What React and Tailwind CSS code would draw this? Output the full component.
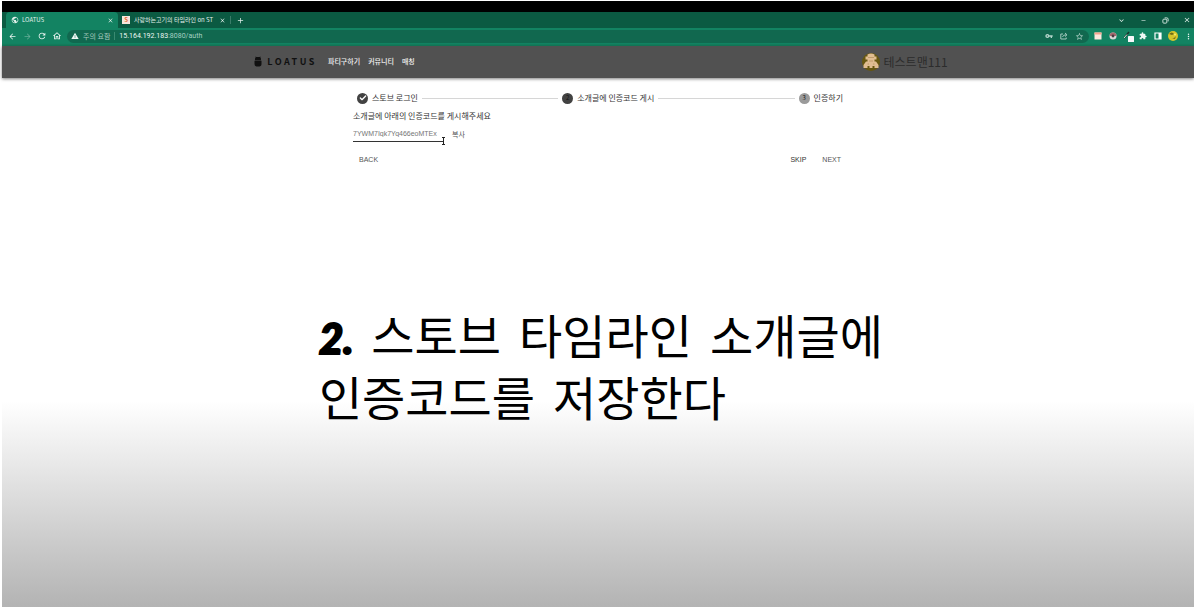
import React from "react";
import { Check } from "lucide-react";
import {
  MdArrowBack,
  MdArrowForward,
  MdRefresh,
  MdOutlineHome,
  MdWarning,
  MdVpnKey,
  MdStarBorder,
  MdExtension,
  MdMoreVert,
  MdClose,
  MdAdd,
  MdPublic,
  MdKeyboardArrowDown,
  MdRemove,
} from "react-icons/md";

function IconButton({ label, children, className = "" }) {
  return (
    <button
      type="button"
      aria-label={label}
      className={"flex size-[10px] shrink-0 items-center justify-center " + className}
    >
      {children}
    </button>
  );
}

function TabStrip() {
  return (
    <div className="flex h-4 items-stretch bg-[#0b5a42] text-[7px] leading-4 text-[#e3f1ec]">
      <div className="ml-1 flex w-[112px] items-center rounded-t bg-[#138362] pr-[3px] pl-[5px]">
        <MdPublic className="size-[8px]" />
        <span className="ml-[3px] flex-1 text-[6px]">LOATUS</span>
        <IconButton label="탭 닫기"><MdClose className="size-[7px]" /></IconButton>
      </div>
      <div className="flex w-[112px] items-center pr-[3px] pl-1">
        <span className="flex size-[8px] shrink-0 items-center justify-center bg-[#f7e6dc] text-[6px] leading-none font-bold text-[#e8622c]">S</span>
        <span className="ml-1 flex-1 text-[6px] whitespace-nowrap">사랑하는고기의 타임라인 on ST</span>
        <IconButton label="탭 닫기"><MdClose className="size-[7px]" /></IconButton>
      </div>
      <div className="my-1 w-px bg-[#3a7c69]" />
      <IconButton label="새 탭" className="ml-1 self-center"><MdAdd className="size-[9px]" /></IconButton>
      <div className="ml-auto flex items-center gap-3 pr-0.5">
        <IconButton label="탭 검색"><MdKeyboardArrowDown className="size-[9px]" /></IconButton>
        <IconButton label="최소화"><MdRemove className="size-[7px]" /></IconButton>
        <IconButton label="이전 크기로">
          <svg viewBox="0 0 8 8" className="size-[7px]" fill="none" stroke="currentColor">
            <rect x="1" y="2.500" width="4.500" height="4.500" rx="1" />
            <path d="M3 1h2.500Q7 1 7 2.500V5" />
          </svg>
        </IconButton>
        <IconButton label="닫기"><MdClose className="size-[8px]" /></IconButton>
      </div>
    </div>
  );
}

function Toolbar() {
  return (
    <div className="flex h-[18px] items-center border-b-2 border-[#147f5e] bg-[#138362] pr-px pl-[5px] text-[#eef7f4]">
      <div className="flex items-center gap-[5px]">
        <IconButton label="뒤로"><MdArrowBack className="size-[9px]" /></IconButton>
        <IconButton label="앞으로" className="text-[#66ad97]"><MdArrowForward className="size-[9px]" /></IconButton>
        <IconButton label="새로고침"><MdRefresh className="size-[10px]" /></IconButton>
        <IconButton label="홈"><MdOutlineHome className="size-[10px]" /></IconButton>
      </div>
      <div className="ml-[5px] flex h-[13px] flex-1 items-center rounded-full bg-[#11684f] pr-[5px] pl-1">
        <MdWarning className="size-[8px]" />
        <span className="ml-1 text-[7px] whitespace-nowrap text-[#a5c9bd]">주의 요함</span>
        <span className="mx-1 h-2 w-px bg-[#3a8a71]" />
        <a href="#auth" className="font-['Roboto'] text-[7px] whitespace-nowrap">
          15.164.192.183<span className="text-[#a5d0c2]">:8080/auth</span>
        </a>
        <div className="ml-auto flex items-center gap-[5px] text-[#b3d3c9]">
          <IconButton label="비밀번호"><MdVpnKey className="size-[8px]" /></IconButton>
          <IconButton label="공유">
            <svg viewBox="0 0 8 8" className="size-[8px]" fill="none" stroke="currentColor" strokeWidth=".9">
              <path d="M3 2H.8v5h5.400V5.500M2.500 5Q3 2.800 6 2.800M5 1l2 1.800-2 1.800" />
            </svg>
          </IconButton>
          <IconButton label="북마크"><MdStarBorder className="size-[9px]" /></IconButton>
        </div>
      </div>
      <div className="ml-1 flex items-center gap-[5px]">
        <IconButton label="캘린더">
          <svg viewBox="0 0 8 8" className="size-[8px]">
            <rect x=".5" y=".5" width="7" height="7" fill="#fbe9df" />
            <path d="M.5.5h7v2h-7z" fill="#f5a48e" />
          </svg>
        </IconButton>
        <IconButton label="포켓 도구">
          <svg viewBox="0 0 8 8" className="size-[8px]">
            <circle cx="4" cy="4" r="3.5" fill="#dcd7d7" />
            <path d="M.5 4a3.500 3.500 0 0 1 7 0z" fill="#a76a70" />
            <circle cx="4" cy="4" r="1.4" fill="#4a3c42" />
          </svg>
        </IconButton>
        <IconButton label="색상 추출">
          <svg viewBox="0 0 10 10" className="size-[10px] overflow-visible">
            <path d="M1 7 6 1" stroke="#17332b" strokeWidth="1.5" />
            <path d="m1 7 3-3.500" stroke="#d7e5e0" strokeWidth="1" />
            <rect x="5" y="5" width="6" height="6" rx=".5" fill="#f8f8fb" />
          </svg>
        </IconButton>
        <IconButton label="확장 프로그램"><MdExtension className="size-[8px]" /></IconButton>
        <IconButton label="사이드 패널">
          <svg viewBox="0 0 8 8" className="size-[8px]">
            <path d="M1 1h6v6H1z" fill="none" stroke="#fff" strokeWidth="1.2" />
            <path d="M4.500 1H7v6H4.500z" fill="#fff" />
          </svg>
        </IconButton>
        <IconButton label="프로필">
          <svg viewBox="0 0 10 10" className="size-[10px]">
            <circle cx="5" cy="5" r="5" fill="#d6c52a" />
            <path d="M1 3q3-3 5 0l-2 1zM3 7q3 1 5-2l-1 3z" fill="#6f6a17" />
            <circle cx="7" cy="3.5" r="1" fill="#f5ec71" />
          </svg>
        </IconButton>
        <IconButton label="메뉴"><MdMoreVert className="size-[9px]" /></IconButton>
      </div>
    </div>
  );
}

function SiteHeader() {
  return (
    <header className="bg-[#515151] shadow-[0_1px_3px_rgba(0,0,0,0.5)]">
      <div className="mx-auto flex h-8 w-[58%] items-center pb-px pl-0.5">
        <a href="#home" className="flex items-center text-[#101010]">
          <svg viewBox="0 0 8 11" className="h-[11px] w-[8px]" fill="currentColor">
            <path d="M1 4Q.8 1.800 1.800 1L1.200.2 2.500.9h3L6.800.2 6.200 1Q7.200 1.800 7 4zM.5 4.800h7V8Q7.500 10.600 4 10.600T.5 8z" />
            <path d="M1 4.400h6" stroke="#2a2a2a" strokeWidth=".8" />
          </svg>
          <span className="ml-[5px] text-[9px] font-bold tracking-[2.5px]">LOATUS</span>
        </a>
        <nav className="ml-[11px] flex gap-2 text-[7px] font-medium whitespace-nowrap text-[#f1f1f1]">
          <a href="#party">파티구하기</a>
          <a href="#community">커뮤니티</a>
          <a href="#matching">매칭</a>
        </nav>
        <div className="-mr-1 ml-auto flex items-center gap-1 text-[12px] text-[#2c2c2c]">
          <svg viewBox="0 0 18 18" className="size-[18px]">
            <circle cx="9" cy="9" r="9" fill="#665710" />
            <path d="M5.500 1.500Q9-.5 12.500 1.500V3.500H14.500V6.500H12.500V8.500H14L16.500 12V15H12.500V13H10.500V15H7.500V13H5.500V15H1.500V12L4 8.500H5.500V6.500H3.500V3.500H5.500z" fill="#e0bd91" />
            <path d="M6 4.500h6M7 8h4M5.500 11h1.500M11 11h1.500" stroke="#b8935f" strokeWidth=".8" />
          </svg>
          테스트맨111
        </div>
      </div>
    </header>
  );
}

function Step({ color, label, children }) {
  return (
    <li className="flex shrink-0 items-center gap-1">
      <span className={"flex size-[11px] items-center justify-center rounded-full text-[6px] leading-none text-[#161616] " + color}>
        {children}
      </span>
      {label}
    </li>
  );
}

function AuthForm() {
  return (
    <main className="mx-auto w-[490px] max-w-full pt-3.5 text-[8px] leading-3 text-[#333]">
      <ol className="flex items-center gap-1 pl-1">
        <Step color="bg-[#424242]" label="스토브 로그인">
          <Check className="size-[8px] text-white" strokeWidth={4} />
        </Step>
        <li aria-hidden="true" className="h-px flex-1 bg-[#d6d6d6]" />
        <Step color="bg-[#424242]" label="소개글에 인증코드 게시">2</Step>
        <li aria-hidden="true" className="h-px flex-1 bg-[#d6d6d6]" />
        <Step color="bg-[#9a9a9a]" label="인증하기">3</Step>
      </ol>
      <label htmlFor="code" className="mt-1.5 block">소개글에 아래의 인증코드를 게시해주세요</label>
      <div className="mt-1 flex items-center">
        <div className="relative">
          <input
            id="code"
            readOnly
            defaultValue="7YWM7Iqk7Yq466eoMTEx"
            className="block h-4 w-[91px] border-b border-[#333] font-['Liberation_Sans'] text-[7px] text-[#757575] outline-none"
          />
          <svg viewBox="0 0 5 8" className="absolute -right-0.5 -bottom-[3px] h-[8px] w-[5px]" fill="none" stroke="#222">
            <path d="M1 .5h3M2.500.5v7M1 7.500h3" />
          </svg>
        </div>
        <button type="button" className="ml-2 text-[7px] text-[#555]">복사</button>
      </div>
      <div className="mt-3 flex gap-4 pr-0.5 pl-1.5 font-['Liberation_Sans'] text-[7px] text-[#555]">
        <button type="button" className="mr-auto">BACK</button>
        <button type="button" className="text-[#333]">SKIP</button>
        <button type="button">NEXT</button>
      </div>
    </main>
  );
}

function Caption() {
  return (
    <section className="mx-auto mt-[141px] w-[47%] pl-px font-['Liberation_Sans','Noto_Sans_CJK_KR',sans-serif] text-[47px] leading-[62px] text-black">
      <p className="flex gap-[18px] whitespace-nowrap">
        <span className="w-[35px] font-['Lato'] text-[42px] font-black italic [-webkit-text-stroke:2px_black]">2.</span>
        <span>스토브</span>
        <span>타임라인</span>
        <span>소개글에</span>
      </p>
      <p className="flex gap-[18px] whitespace-nowrap">
        <span>인증코드를</span>
        <span>저장한다</span>
      </p>
    </section>
  );
}

export default function App() {
  return (
    <div className="min-h-screen bg-white pt-px pl-0.5 font-['Noto_Sans_CJK_KR',sans-serif]">
      <div className="flex min-h-[calc(100vh-1px)] flex-col bg-[linear-gradient(to_bottom,#fff_66%,#e7e7e7_77%,#b3b3b3_100%)]">
        <div className="h-[11px] bg-black" />
        <TabStrip />
        <Toolbar />
        <SiteHeader />
        <AuthForm />
        <Caption />
      </div>
    </div>
  );
}
